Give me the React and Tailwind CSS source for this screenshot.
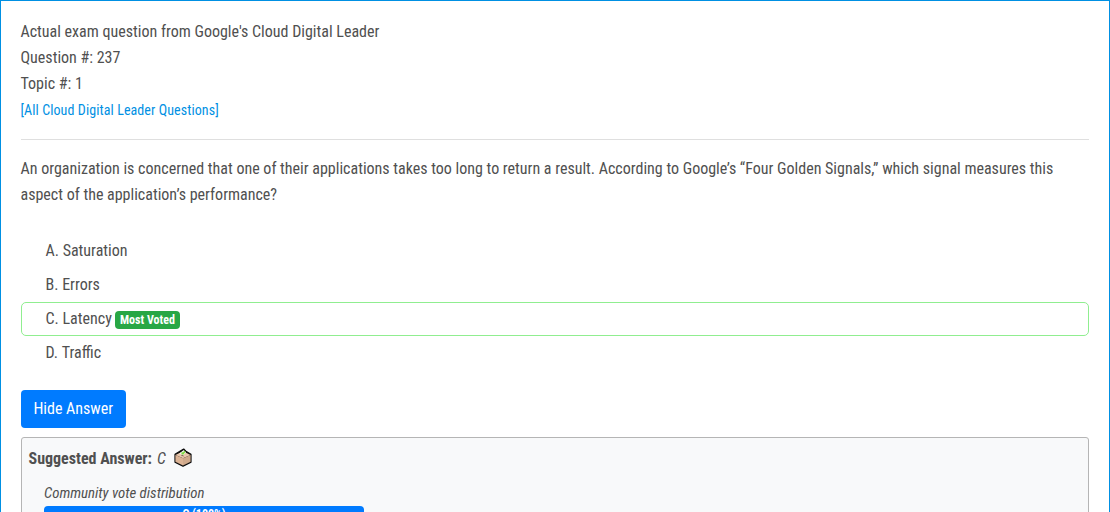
const choices = [
  { letter: 'A', text: 'Saturation' },
  { letter: 'B', text: 'Errors' },
  { letter: 'C', text: 'Latency', mostVoted: true },
  { letter: 'D', text: 'Traffic' },
];

function BallotBox() {
  return (
    <svg className="mb-0.5 size-5 shrink-0" viewBox="0 0 20 20" aria-hidden="true">
      <path d="M2 6.2 L6.5 3.6 L10.7 1 L13.3 3.6 L18 6.2 V14.2 L10 18.2 L2 14.2 Z" fill="#0b0b0b" stroke="#0b0b0b" strokeWidth="1.2" strokeLinejoin="round" />
      <path d="M2.4 6.9 L10 3.2 L17.6 6.9 L10 10.2 Z" fill="#e8c6ab" />
      <path d="M2.4 6.9 L10 10.2 V17.5 L2.4 13.8 Z" fill="#dcb394" />
      <path d="M17.6 6.9 L10 10.2 V17.5 L17.6 13.8 Z" fill="#cfa98b" />
      <path d="M6.3 5.6 L10.7 2 L13.1 4.6 L9.8 7.6 Z" fill="#f0f5e9" />
      <path d="M8.6 4.6 L9.9 5.8 L12 3.2" fill="none" stroke="#7fd83f" strokeWidth="1.6" />
      <path d="M8.2 7.1 L10.6 8" stroke="#5c4b3e" strokeWidth=".8" />
    </svg>
  );
}

function Choice({ letter, text, mostVoted }) {
  return (
    <li
      className={
        mostVoted
          ? 'flex h-[34px] items-center rounded-[5px] border border-[#90ee90] pl-6'
          : 'flex h-[34px] items-center border border-transparent pl-6'
      }
    >
      <span>
        <span className="mr-[3.7px]">{letter}.</span>
        {text}
      </span>
      {mostVoted && (
        <span className="mt-px ml-[3.2px] flex h-[18px] items-center rounded bg-[#28a745] px-[5px] text-xs font-bold text-white">
          Most Voted
        </span>
      )}
    </li>
  );
}

export default function App() {
  return (
    <main className="h-[512px] overflow-hidden border border-b-0 border-[#0090e3] bg-white pt-[18px] pr-5 pl-[19.5px] font-['Roboto_Condensed',Roboto,sans-serif] text-base leading-[26px] text-[#505050]">
      <header className="border-b border-[#dfdfdf] pb-4">
        <p>Actual exam question from Google's Cloud Digital Leader</p>
        <p>Question #: 237</p>
        <p>Topic #: 1</p>
        <a href="#questions" className="block text-sm leading-[26px] tracking-[0.09px] text-[#0090e3]">
          [All Cloud Digital Leader Questions]
        </a>
      </header>

      <p className="mt-4">
        An organization is concerned that one of their applications takes too long to return a result. According to
        Google’s “Four Golden Signals,” which signal measures this aspect of the application’s performance?
      </p>

      <ul className="mt-[26px]">
        {choices.map((choice) => (
          <Choice key={choice.letter} {...choice} />
        ))}
      </ul>

      <button className="mt-5 flex h-[38px] w-[105.5px] items-center justify-center rounded bg-[#007bff] text-white">
        Hide Answer
      </button>

      <section className="mt-[9px] h-[120px] rounded-[3px] border border-[#b5b5b5] bg-[#f8f9fa] px-[7px] pt-2">
        <div className="flex h-[26px] items-center">
          <strong className="font-bold">Suggested Answer:</strong>
          <em className="mr-[7.5px] ml-[5px]">C</em>
          <BallotBox />
        </div>
        <div className="mt-[9px] pl-[15.5px]">
          <p className="text-[14.85px] leading-[25px] italic">Community vote distribution</p>
          <div className="flex h-4 w-80 items-center justify-center rounded bg-[#007bff] text-xs font-bold text-white">
            C (100%)
          </div>
        </div>
      </section>
    </main>
  );
}
